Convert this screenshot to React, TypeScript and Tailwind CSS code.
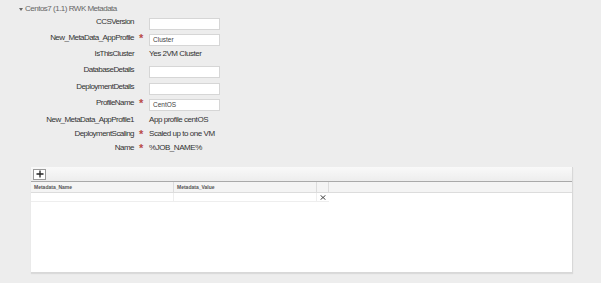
import React from 'react';

interface Field {
    label: string;
    required?: boolean;
    input?: boolean;
    value?: string;
    h: string;
}

const fields: Field[] = [
    { label: 'CCSVersion', input: true, h: 'h-[16px]' },
    { label: 'New_MetaData_AppProfile', required: true, input: true, value: 'Cluster', h: 'h-[16px]' },
    { label: 'IsThisCluster', value: 'Yes 2VM Cluster', h: 'h-[16px]' },
    { label: 'DatabaseDetails', input: true, h: 'h-[17px]' },
    { label: 'DeploymentDetails', input: true, h: 'h-[16px]' },
    { label: 'ProfileName', required: true, input: true, value: 'CentOS', h: 'h-[17px]' },
    { label: 'New_MetaData_AppProfile1', value: 'App profile centOS', h: 'h-[14px]' },
    { label: 'DeploymentScaling', required: true, value: 'Scaled up to one VM', h: 'h-[14px]' },
    { label: 'Name', required: true, value: '%JOB_NAME%', h: 'h-[14px]' },
];

function FieldRow({ f }: { f: Field }) {
    return (
        <div className={`flex items-start ${f.h}`}>
            <div className="w-[134px] text-right text-[8px] leading-[9px] tracking-[-0.55px] text-[#333]">
                {f.label}
            </div>
            <div className="w-[15px] pl-[5px] text-[11px] leading-[11px] font-bold text-[#b94a48]">
                {f.required ? '*' : ''}
            </div>
            {f.input ? (
                <div className="mt-[1px] w-[71px] h-[12px] bg-white border border-[#d6d6d6] pl-[3px] text-[6.5px] leading-[10px] text-[#444]">
                    {f.value}
                </div>
            ) : (
                <div className="text-[8px] leading-[9px] tracking-[-0.45px] text-[#333]">{f.value}</div>
            )}
        </div>
    );
}

export default function App() {
    return (
        <div
            className="w-[601px] h-[283px] overflow-hidden bg-[#ededed]"
            style={{ fontFamily: '"Liberation Sans", Arial, sans-serif' }}
        >
            {/* section header */}
            <div className="flex items-center pt-[4px] pl-[19px] h-[14px]">
                <svg width="4" height="3" viewBox="0 0 4 3" className="mr-[2px]">
                    <path d="M0 0 L4 0 L2 3 Z" fill="#666" />
                </svg>
                <span className="text-[8px] leading-[10px] tracking-[-0.5px] text-[#666]">
                    Centos7 (1.1) RWK Metadata
                </span>
            </div>

            {/* fields */}
            <div className="mt-[3px]">
                {fields.map((f) => (
                    <FieldRow key={f.label} f={f} />
                ))}
            </div>

            {/* table panel */}
            <div className="mt-[10px] ml-[31px] w-[542px] h-[106px] bg-white border-r border-b border-[#d8d8d8] shadow-[0_1px_1px_rgba(0,0,0,0.08)]">
                <div className="h-[15px] bg-gradient-to-b from-[#f9f9f9] to-[#ededed] border-b border-[#a9a9a9] flex items-center pl-[2px]">
                    <div className="w-[13px] h-[11px] bg-white border border-[#9a9a9a] flex items-center justify-center">
                        <svg width="8" height="8" viewBox="0 0 8 8">
                            <path d="M4 0.5 V7.5 M0.5 4 H7.5" stroke="#222" strokeWidth="1.3" />
                        </svg>
                    </div>
                </div>
                <div className="flex h-[11px] bg-[#f4f4f4] border-b border-[#dcdcdc] text-[5px] leading-[10px] text-[#555] font-bold">
                    <div className="w-[143px] pl-[3px] border-r border-[#dcdcdc]">Metadata_Name</div>
                    <div className="w-[143px] pl-[3px] border-r border-[#dcdcdc]">Metadata_Value</div>
                    <div className="w-[12px] border-r border-[#dcdcdc]"></div>
                    <div className="flex-1"></div>
                </div>
                <div className="flex h-[9px]">
                    <div className="w-[143px] border-r border-b border-[#eeeeee]"></div>
                    <div className="w-[143px] border-r border-b border-[#eeeeee]"></div>
                    <div className="w-[12px] border-b border-[#eeeeee] flex items-center justify-center">
                        <svg width="6" height="5" viewBox="0 0 6 5">
                            <path d="M0.5 0.3 L5.5 4.7 M5.5 0.3 L0.5 4.7" stroke="#333" strokeWidth="0.9" />
                        </svg>
                    </div>
                </div>
            </div>
        </div>
    );
}
